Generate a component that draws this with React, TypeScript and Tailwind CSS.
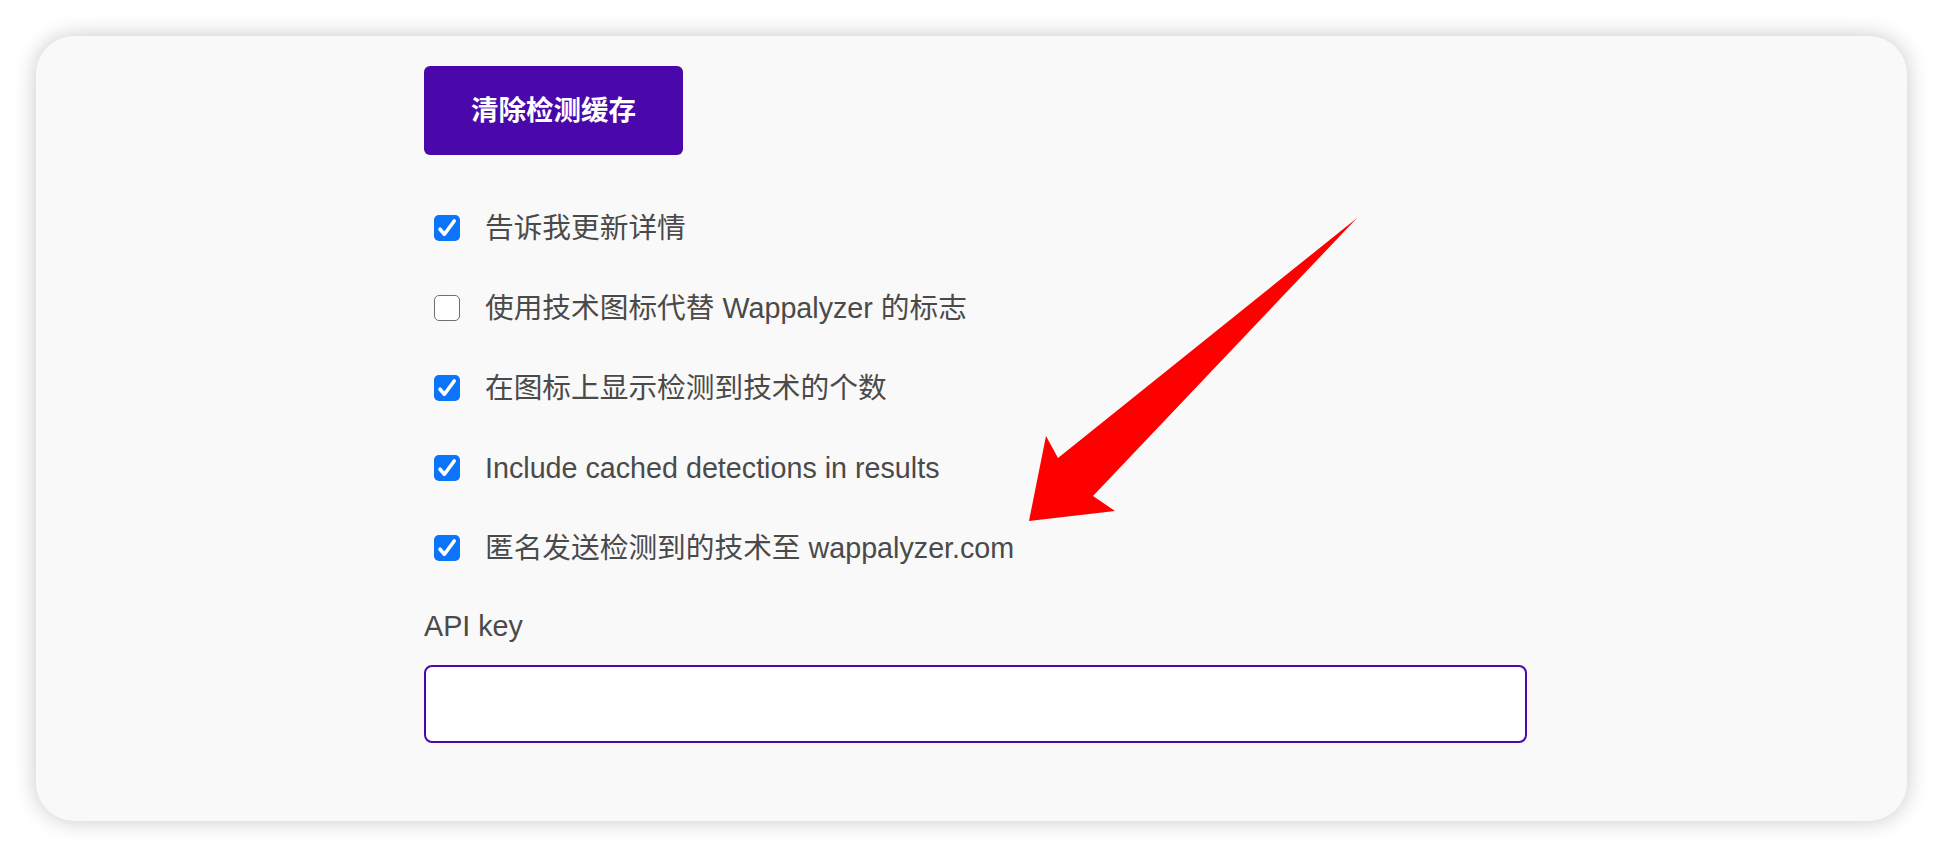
import React from "react";

const font = '"Liberation Sans", "Noto Sans CJK SC", Arial, sans-serif';

function Box({ checked }: { checked: boolean }) {
  if (checked) {
    return (
      <div className="ml-[10px] h-[26px] w-[26px] shrink-0 rounded-[5px] bg-[#0a74fb]">
        <svg width="26" height="26" viewBox="0 0 26 26">
          <path d="M6 14.2 L10.4 19.2 L20.2 6" fill="none" stroke="#fff" strokeWidth="3.6" strokeLinecap="round" strokeLinejoin="round" />
        </svg>
      </div>
    );
  }
  return <div className="ml-[10px] h-[26px] w-[26px] shrink-0 rounded-[5px] border-[1.5px] border-[#6f6f6f] bg-white" />;
}

const rows: { label: string; checked: boolean }[] = [
  { label: "告诉我更新详情", checked: true },
  { label: "使用技术图标代替 Wappalyzer 的标志", checked: false },
  { label: "在图标上显示检测到技术的个数", checked: true },
  { label: "Include cached detections in results", checked: true },
  { label: "匿名发送检测到的技术至 wappalyzer.com", checked: true },
];

export default function App() {
  return (
    <div className="h-[858px] w-[1944px] bg-white p-[36px] pr-[37px]" style={{ fontFamily: font }}>
      <div className="relative h-[785px] rounded-[38px] bg-[#f9f9f9] pl-[388px] pt-[30px] shadow-[0_0_22px_rgba(0,0,0,0.22)]">
        <button className="flex h-[89px] w-[259px] items-center justify-center rounded-[6px] bg-[#4a08ab] text-[27.5px] font-bold text-white">
          清除检测缓存
        </button>
        <div className="mt-[33px] flex flex-col">
          {rows.map((r) => (
            <div key={r.label} className="flex h-[80px] items-center">
              <Box checked={r.checked} />
              <span className="ml-[25px] text-[28.7px] leading-none text-[#4a4a4a]">{r.label}</span>
            </div>
          ))}
        </div>
        <div className="mt-[22px] text-[28.7px] leading-[32px] text-[#4a4a4a]">API key</div>
        <div className="mt-[23px] h-[78px] w-[1103px] rounded-[8px] border-2 border-[#4a08ab] bg-white" />
        <svg className="absolute left-0 top-0" width="1944" height="858" viewBox="36 36 1944 858" style={{ pointerEvents: "none" }}>
          <polygon points="1357,218 1093,496 1115,511 1029,521 1046,436 1058,458" fill="#ff0000" />
        </svg>
      </div>
    </div>
  );
}
